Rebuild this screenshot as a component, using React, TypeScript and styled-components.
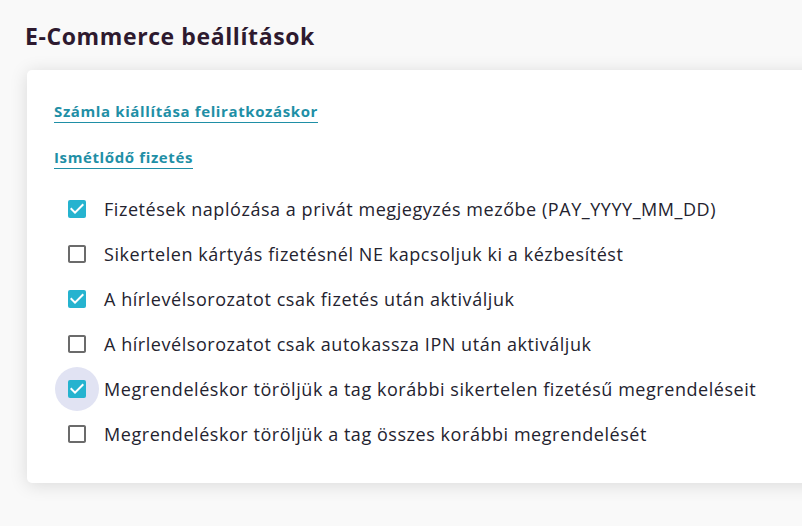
import { createGlobalStyle } from "styled-components";
import styled from "styled-components";

const COLOR = {
    PAGE: "#f9f9f9",
    TITLE: "#2e1a2f",
    LINK: "#1f8fa6",
    TEXT: "#24232f",
    CHECKED: "#25b3cf",
    UNCHECKED: "#6b6b6b",
    FOCUS: "#e1e3f3",
};

const GlobalStyle = createGlobalStyle`
    html, body {
        margin: 0;
        padding: 0;
        background: ${COLOR.PAGE};
        font-family: "Open Sans", "Noto Sans", sans-serif;
    }
`;

interface Option {
    label: string;
    checked: boolean;
    focused?: boolean;
}

const OPTIONS: Option[] = [
    { label: "Fizetések naplózása a privát megjegyzés mezőbe (PAY_YYYY_MM_DD)", checked: true },
    { label: "Sikertelen kártyás fizetésnél NE kapcsoljuk ki a kézbesítést", checked: false },
    { label: "A hírlevélsorozatot csak fizetés után aktiváljuk", checked: true },
    { label: "A hírlevélsorozatot csak autokassza IPN után aktiváljuk", checked: false },
    { label: "Megrendeléskor töröljük a tag korábbi sikertelen fizetésű megrendeléseit", checked: true, focused: true },
    { label: "Megrendeléskor töröljük a tag összes korábbi megrendelését", checked: false },
];

const Page = styled.div`
    width: 802px;
    height: 526px;
    overflow: hidden;
    box-sizing: border-box;
    padding: 18px 0 0 25px;
`;

const Title = styled.h2`
    margin: 0;
    font-size: 23px;
    font-weight: 700;
    line-height: 36px;
    color: ${COLOR.TITLE};
    letter-spacing: 0.6px;
`;

const Card = styled.section`
    margin: 16px -40px 0 2px;
    height: 413px;
    box-sizing: border-box;
    background: #fff;
    border-radius: 5px;
    box-shadow: 0 2px 18px rgba(0, 0, 0, 0.13);
    padding: 31px 27px 0;
`;

const LinkList = styled.div`
    display: flex;
    flex-direction: column;
    align-items: flex-start;
    gap: 24px;
`;

const SectionLink = styled.a`
    display: inline-block;
    font-size: 15px;
    font-weight: 700;
    line-height: 20px;
    color: ${COLOR.LINK};
    text-decoration: none;
    padding-bottom: 1px;
    border-bottom: 1.5px solid ${COLOR.LINK};
    letter-spacing: 0.62px;
    cursor: pointer;
`;

const OptionList = styled.div`
    display: flex;
    flex-direction: column;
    margin-top: 17px;
`;

const Row = styled.label`
    display: flex;
    align-items: center;
    height: 45px;
    margin-left: 1px;
    cursor: pointer;
`;

const BoxWrap = styled.span<{ $focused?: boolean }>`
    display: flex;
    align-items: center;
    justify-content: center;
    width: 44px;
    height: 44px;
    border-radius: 50%;
    flex-shrink: 0;
    background: ${({ $focused }) => ($focused ? COLOR.FOCUS : "transparent")};
`;

const BoxIcon = styled.svg<{ $checked: boolean }>`
    width: 24px;
    height: 24px;
    fill: ${({ $checked }) => ($checked ? COLOR.CHECKED : COLOR.UNCHECKED)};
`;

const LabelText = styled.span`
    margin-left: 5px;
    font-size: 18px;
    line-height: 24px;
    color: ${COLOR.TEXT};
    letter-spacing: 0.55px;
    white-space: nowrap;
`;

const CheckBox = ({ checked }: { checked: boolean }) => (
    <BoxIcon $checked={checked} viewBox="0 0 24 24">
        {checked ? (
            <>
                <rect x="3" y="3" width="18" height="18" rx="2" />
                <path
                    d="M10 17l-5-5 1.41-1.41L10 14.17l7.59-7.59L19 8l-9 9z"
                    fill="#fff"
                />
            </>
        ) : (
            <path d="M19 5v14H5V5h14m0-2H5c-1.1 0-2 .9-2 2v14c0 1.1.9 2 2 2h14c1.1 0 2-.9 2-2V5c0-1.1-.9-2-2-2z" />
        )}
    </BoxIcon>
);

const App = () => {
    return (
        <>
            <GlobalStyle />
            <Page>
                <Title>E-Commerce beállítások</Title>
                <Card>
                    <LinkList>
                        <SectionLink>Számla kiállítása feliratkozáskor</SectionLink>
                        <SectionLink>Ismétlődő fizetés</SectionLink>
                    </LinkList>
                    <OptionList>
                        {OPTIONS.map((option) => (
                            <Row key={option.label}>
                                <BoxWrap $focused={option.focused}>
                                    <CheckBox checked={option.checked} />
                                </BoxWrap>
                                <LabelText>{option.label}</LabelText>
                            </Row>
                        ))}
                    </OptionList>
                </Card>
            </Page>
        </>
    );
};

export default App;
